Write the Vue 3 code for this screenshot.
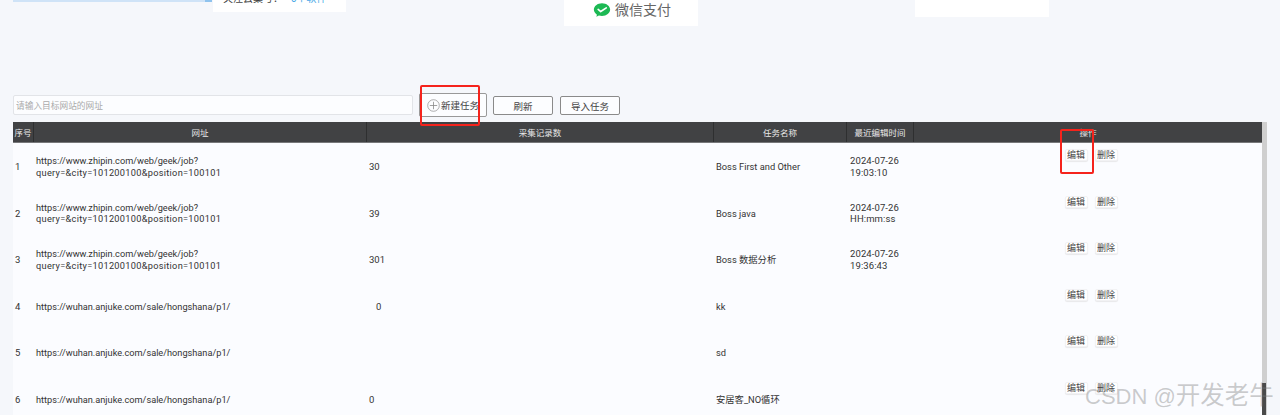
<script setup>
const zhipin = { url: 'https://www.zhipin.com/web/geek/job?', query: 'query=&city=101200100&position=100101' }
const anjuke = { url: 'https://wuhan.anjuke.com/sale/hongshana/p1/', query: '' }
const rows = [
  { id: 1, ...zhipin, count: '30', name: 'Boss First and Other', time: '2024-07-26\n19:03:10' },
  { id: 2, ...zhipin, count: '39', name: 'Boss java', time: '2024-07-26\nHH:mm:ss' },
  { id: 3, ...zhipin, count: '301', name: 'Boss 数据分析', time: '2024-07-26\n19:36:43' },
  { id: 4, ...anjuke, count: '0', indent: true, name: 'kk', time: '' },
  { id: 5, ...anjuke, count: '', name: 'sd', time: '' },
  { id: 6, ...anjuke, count: '0', name: '安居客_NO循环', time: '' },
]
</script>

<template>
  <div class="page">
    <div class="top">
      <div class="blue-line"></div>
      <div class="card card-a"><div class="follow">关注云巢号：<span>0个软件</span></div></div>
      <div class="card card-b">
        <svg class="wx" width="18" height="16" viewBox="0 0 21 18">
          <path d="M10.5 1C5.2 1 1 4.4 1 8.5c0 2.4 1.400 4.500 3.600 5.900l-.7 2.600 3-1.500c1.100.3 2.300.5 3.600.5 5.300 0 9.500-3.400 9.500-7.500S15.800 1 10.500 1z" fill="#1db954"/>
          <path d="M6 8.300l3 2.500 6.500-4.300" fill="none" stroke="#fff" stroke-width="1.900" stroke-linecap="round" stroke-linejoin="round"/>
        </svg>
        <span>微信支付</span>
      </div>
      <div class="card card-c"></div>
    </div>

    <div class="toolbar">
      <input class="url-input" placeholder="请输入目标网站的网址" />
      <button class="tbtn new">
        <svg width="13" height="13" viewBox="0 0 13 13">
          <circle cx="6.500" cy="6.500" r="5.800" fill="none" stroke="#999" stroke-width="0.800"/>
          <path d="M6.500 2.800v7.400M2.800 6.500h7.400" stroke="#888" stroke-width="0.800"/>
        </svg>
        <span>新建任务</span>
      </button>
      <button class="tbtn refresh">刷新</button>
      <button class="tbtn import">导入任务</button>
    </div>

    <div class="table-wrap">
      <div class="table">
        <div class="row head">
          <div>序号</div><div>网址</div><div>采集记录数</div><div>任务名称</div><div>最近编辑时间</div><div>操作</div>
        </div>
        <div class="row body" v-for="r in rows" :key="r.id">
          <div class="cell">{{ r.id }}</div>
          <div class="cell url">
            <div>
              <div>{{ r.url }}</div>
              <div v-if="r.query" class="query">{{ r.query }}</div>
            </div>
          </div>
          <div class="cell" :class="{ indent: r.indent }">{{ r.count }}</div>
          <div class="cell name">{{ r.name }}</div>
          <div class="cell time">{{ r.time }}</div>
          <div class="ops"><button>编辑</button><button>删除</button></div>
        </div>
      </div>
      <div class="scrollbar"><div class="thumb"></div></div>
    </div>

    <div class="mark mark-new"></div>
    <div class="mark mark-edit"></div>
    <div class="watermark">CSDN @<span>开发老牛</span></div>
  </div>
</template>

<style>
html, body { margin: 0; background: #f5f7fb; overflow: hidden; }
</style>

<style scoped>
.page {
  position: relative;
  width: 1280px;
  height: 415px;
  overflow: hidden;
  background: #f5f7fb;
  font-family: Roboto, "Noto Sans CJK SC", sans-serif;
  color: #333;
}
.top { position: relative; height: 85px; display: flex; align-items: flex-start; }
.blue-line { width: 192px; height: 2px; margin-left: 13px; background: #cfe3f7; flex: none; border-right: 7px solid #8fc3ee; margin-right: 1px; }
.card { background: #fff; flex: none; }
.card-a { width: 133px; height: 12px; overflow: hidden; }
.follow { margin: -9px 0 0 10px; font-size: 10px; line-height: 16px; white-space: nowrap; color: #444; }
.follow span { color: #45a8e6; margin-left: 8px; }
.card-b {
  width: 134px; height: 26px; margin-left: 218px;
  display: flex; align-items: flex-start; gap: 4px;
  font-size: 14px; line-height: 20px; color: #666; padding-left: 29px; box-sizing: border-box;
}
.wx { flex: none; margin-top: 2px; }
.card-c { width: 134px; height: 17px; margin-left: 217px; }

.toolbar { display: flex; align-items: flex-start; margin-left: 13px; height: 37px; }
.url-input {
  width: 400px; height: 20px; box-sizing: border-box; margin-top: 10px;
  border: 1px solid #e2e4e8; border-radius: 2px; background: #fcfdff; padding: 0 2px;
  font: 8.700px "Noto Sans CJK SC", sans-serif; outline: none;
}
.url-input::placeholder { color: #aaa; }
.tbtn {
  box-sizing: border-box; border: 1px solid #8a8a8a; border-radius: 2px; background: #fcfdff;
  font: 9.500px "Noto Sans CJK SC", sans-serif; color: #444; padding: 0;
  display: flex; align-items: center; justify-content: center; flex: none;
}
.new { width: 68px; height: 24px; margin: 8px 0 0 6px; gap: 1px; border-color: #999; justify-content: flex-start; padding-left: 7px; }
.refresh { width: 60px; height: 19px; margin: 11px 0 0 6px; }
.import { width: 60px; height: 19px; margin: 11px 0 0 7px; }

.table-wrap { display: flex; margin-left: 13px; align-items: flex-start; }
.table { width: 1249px; flex: none; background: #fbfcff; height: 293px; }
.row { display: grid; grid-template-columns: 21px 333px 347px 133px 67px 348px; }
.head {
  height: 21px; background: #414244; color: #e8e8e8; border-bottom: 1px solid #77787a; box-sizing: border-box;
  font: 8.500px/20px "Noto Sans CJK SC", sans-serif; text-align: center;
}
.head > div { border-right: 1px solid #2e2f30; }
.head > div:last-child { border-right: none; }
.body { height: 46.500px; font-size: 9.500px; line-height: 11.500px; color: #333; }
.cell { display: flex; align-items: center; white-space: pre-line; padding-left: 2px; padding-top: 1px; }
.url { font-size: 9.200px; }
.query { letter-spacing: .3px; }
.name { font-size: 9.300px; }
.indent { padding-left: 9px; }
.time { padding-left: 3px; letter-spacing: .1px; }
.ops { display: flex; justify-content: center; gap: 7px; padding-top: 6px; align-items: flex-start; padding-left: 6px; }
.ops button {
  width: 23px; height: 12px; box-sizing: border-box; padding: 0;
  border: 1px solid #f2f2f4; border-radius: 2px; background: #fff; box-shadow: 0 1px 1px #e8e8ea;
  font: 9px/10px "Noto Sans CJK SC", sans-serif; color: #444;
}
.scrollbar { width: 5px; height: 293px; background: #cfcfcf; flex: none; position: relative; }
.thumb { position: absolute; left: 0; right: 1px; bottom: 0; height: 32px; background: #4a4a4a; }

.mark { position: absolute; box-sizing: border-box; border: 2px solid #f5231c; border-radius: 2px; pointer-events: none; }
.mark-new { left: 420px; top: 85px; width: 60px; height: 41px; }
.mark-edit { left: 1060px; top: 129px; width: 34px; height: 45px; }
.watermark {
  position: absolute; left: 1085px; top: 411px; transform: translateY(-100%);
  font: 22px "Liberation Sans", "Noto Sans CJK SC", sans-serif; color: rgba(120,120,120,.38); white-space: nowrap;
}
.watermark span { font-size: 24.500px; }
</style>
